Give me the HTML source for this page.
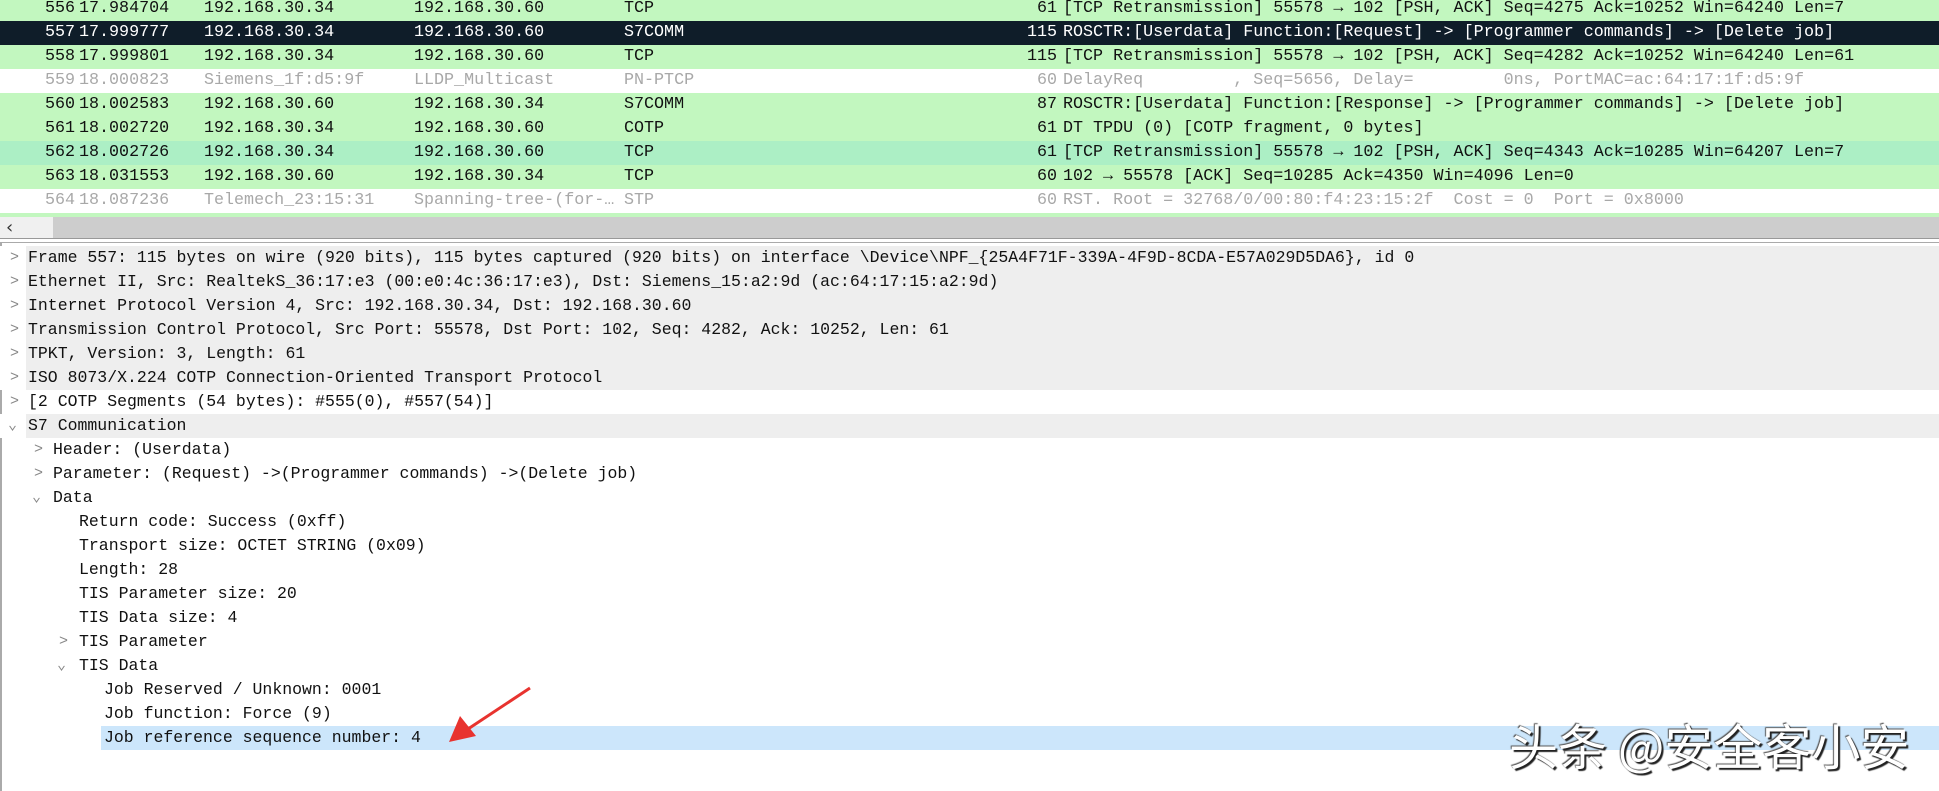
<!DOCTYPE html>
<html><head><meta charset="utf-8"><style>
html,body{margin:0;padding:0;background:#fff;}
body{width:1939px;height:791px;position:relative;overflow:hidden;font-family:"Liberation Mono","DejaVu Sans Mono",monospace;}
.pr{position:absolute;left:0;width:1939px;height:24px;line-height:24px;font-size:16.7px;white-space:pre;background:#c2f7bf;color:#111;}
.pr span{position:absolute;top:0;}
.pr .n{left:0;width:75px;text-align:right;}
.pr .t{left:79px}.pr .s{left:204px}.pr .d{left:414px}.pr .p{left:624px}
.pr .l{left:0;width:1057px;text-align:right}.pr .i{left:1063px}
.sel{background:#0f1d29;color:#fff;}
.dim{background:#fff;color:#a8a8a8;}
.alt{background:#acefc5;}
.dr{position:absolute;left:0;width:1939px;height:24px;line-height:24px;font-size:16.5px;white-space:pre;color:#111;}
.dr .a{position:absolute;top:0;color:#888;font-size:15px;}
.dr .x{position:absolute;top:0;}
.g{background:linear-gradient(to right,#fff 26px,#eeeeee 26px);}
</style></head><body>
<div style="position:absolute;left:0;top:0;width:2px;height:238px;background:#aaa"></div>

<div class="pr" style="top:-3px"><span class="n">556</span><span class="t">17.984704</span><span class="s">192.168.30.34</span><span class="d">192.168.30.60</span><span class="p">TCP</span><span class="l">61</span><span class="i">[TCP Retransmission] 55578 → 102 [PSH, ACK] Seq=4275 Ack=10252 Win=64240 Len=7</span></div>
<div class="pr sel" style="top:21px"><span class="n">557</span><span class="t">17.999777</span><span class="s">192.168.30.34</span><span class="d">192.168.30.60</span><span class="p">S7COMM</span><span class="l">115</span><span class="i">ROSCTR:[Userdata] Function:[Request] -> [Programmer commands] -> [Delete job]</span></div>
<div class="pr" style="top:45px"><span class="n">558</span><span class="t">17.999801</span><span class="s">192.168.30.34</span><span class="d">192.168.30.60</span><span class="p">TCP</span><span class="l">115</span><span class="i">[TCP Retransmission] 55578 → 102 [PSH, ACK] Seq=4282 Ack=10252 Win=64240 Len=61</span></div>
<div class="pr dim" style="top:69px"><span class="n">559</span><span class="t">18.000823</span><span class="s">Siemens_1f:d5:9f</span><span class="d">LLDP_Multicast</span><span class="p">PN-PTCP</span><span class="l">60</span><span class="i">DelayReq         , Seq=5656, Delay=         0ns, PortMAC=ac:64:17:1f:d5:9f</span></div>
<div class="pr" style="top:93px"><span class="n">560</span><span class="t">18.002583</span><span class="s">192.168.30.60</span><span class="d">192.168.30.34</span><span class="p">S7COMM</span><span class="l">87</span><span class="i">ROSCTR:[Userdata] Function:[Response] -> [Programmer commands] -> [Delete job]</span></div>
<div class="pr" style="top:117px"><span class="n">561</span><span class="t">18.002720</span><span class="s">192.168.30.34</span><span class="d">192.168.30.60</span><span class="p">COTP</span><span class="l">61</span><span class="i">DT TPDU (0) [COTP fragment, 0 bytes]</span></div>
<div class="pr alt" style="top:141px"><span class="n">562</span><span class="t">18.002726</span><span class="s">192.168.30.34</span><span class="d">192.168.30.60</span><span class="p">TCP</span><span class="l">61</span><span class="i">[TCP Retransmission] 55578 → 102 [PSH, ACK] Seq=4343 Ack=10285 Win=64207 Len=7</span></div>
<div class="pr" style="top:165px"><span class="n">563</span><span class="t">18.031553</span><span class="s">192.168.30.60</span><span class="d">192.168.30.34</span><span class="p">TCP</span><span class="l">60</span><span class="i">102 → 55578 [ACK] Seq=10285 Ack=4350 Win=4096 Len=0</span></div>
<div class="pr dim" style="top:189px"><span class="n">564</span><span class="t">18.087236</span><span class="s">Telemech_23:15:31</span><span class="d">Spanning-tree-(for-…</span><span class="p">STP</span><span class="l">60</span><span class="i">RST. Root = 32768/0/00:80:f4:23:15:2f  Cost = 0  Port = 0x8000</span></div>
<div style="position:absolute;left:0;top:213px;width:1939px;height:4px;background:#c2f7bf"></div>

<div style="position:absolute;left:0;top:217px;width:1939px;height:21px;background:#cdcdcd"></div>
<div style="position:absolute;left:0;top:217px;width:53px;height:21px;background:#f0f0f0;color:#333;font:18px 'DejaVu Sans',sans-serif;line-height:21px;padding-left:6px;box-sizing:border-box">‹</div>
<div style="position:absolute;left:0;top:238px;width:1939px;height:1px;background:#999"></div>
<div style="position:absolute;left:0;top:242px;width:1939px;height:1px;background:#aaa"></div>
<div style="position:absolute;left:0;top:242px;width:2px;height:549px;background:#aaa"></div>

<div class="dr g" style="top:246px"><span class="a" style="left:10px">&gt;</span><span class="x" style="left:28px">Frame 557: 115 bytes on wire (920 bits), 115 bytes captured (920 bits) on interface \Device\NPF_{25A4F71F-339A-4F9D-8CDA-E57A029D5DA6}, id 0</span></div>
<div class="dr g" style="top:270px"><span class="a" style="left:10px">&gt;</span><span class="x" style="left:28px">Ethernet II, Src: RealtekS_36:17:e3 (00:e0:4c:36:17:e3), Dst: Siemens_15:a2:9d (ac:64:17:15:a2:9d)</span></div>
<div class="dr g" style="top:294px"><span class="a" style="left:10px">&gt;</span><span class="x" style="left:28px">Internet Protocol Version 4, Src: 192.168.30.34, Dst: 192.168.30.60</span></div>
<div class="dr g" style="top:318px"><span class="a" style="left:10px">&gt;</span><span class="x" style="left:28px">Transmission Control Protocol, Src Port: 55578, Dst Port: 102, Seq: 4282, Ack: 10252, Len: 61</span></div>
<div class="dr g" style="top:342px"><span class="a" style="left:10px">&gt;</span><span class="x" style="left:28px">TPKT, Version: 3, Length: 61</span></div>
<div class="dr g" style="top:366px"><span class="a" style="left:10px">&gt;</span><span class="x" style="left:28px">ISO 8073/X.224 COTP Connection-Oriented Transport Protocol</span></div>
<div class="dr" style="top:390px"><span class="a" style="left:10px">&gt;</span><span class="x" style="left:28px">[2 COTP Segments (54 bytes): #555(0), #557(54)]</span></div>
<div class="dr g" style="top:414px"><span class="a" style="left:8px">⌄</span><span class="x" style="left:28px">S7 Communication</span></div>
<div class="dr" style="top:438px"><span class="a" style="left:34px">&gt;</span><span class="x" style="left:53px">Header: (Userdata)</span></div>
<div class="dr" style="top:462px"><span class="a" style="left:34px">&gt;</span><span class="x" style="left:53px">Parameter: (Request) ->(Programmer commands) ->(Delete job)</span></div>
<div class="dr" style="top:486px"><span class="a" style="left:32px">⌄</span><span class="x" style="left:53px">Data</span></div>
<div class="dr" style="top:510px"><span class="x" style="left:79px">Return code: Success (0xff)</span></div>
<div class="dr" style="top:534px"><span class="x" style="left:79px">Transport size: OCTET STRING (0x09)</span></div>
<div class="dr" style="top:558px"><span class="x" style="left:79px">Length: 28</span></div>
<div class="dr" style="top:582px"><span class="x" style="left:79px">TIS Parameter size: 20</span></div>
<div class="dr" style="top:606px"><span class="x" style="left:79px">TIS Data size: 4</span></div>
<div class="dr" style="top:630px"><span class="a" style="left:59px">&gt;</span><span class="x" style="left:79px">TIS Parameter</span></div>
<div class="dr" style="top:654px"><span class="a" style="left:57px">⌄</span><span class="x" style="left:79px">TIS Data</span></div>
<div class="dr" style="top:678px"><span class="x" style="left:104px">Job Reserved / Unknown: 0001</span></div>
<div class="dr" style="top:702px"><span class="x" style="left:104px">Job function: Force (9)</span></div>
<div class="dr" style="top:726px;left:101px;width:1838px;background:#cce6fb"><span class="x" style="left:3px">Job reference sequence number: 4</span></div>

<svg style="position:absolute;left:0;top:0" width="1939" height="791">
<line x1="530" y1="688" x2="468" y2="729" stroke="#e8332f" stroke-width="3"/>
<polygon points="449,742 460,716 476,736" fill="#e8332f"/>
</svg>
<div style="position:absolute;left:1509px;top:717px;font:49px 'Noto Sans CJK SC','WenQuanYi Zen Hei',sans-serif;color:#fff;line-height:56px;text-shadow:2px 2px 1px #222,-1px -1px 1px #555;white-space:nowrap">头条 @安全客小安</div>
</body></html>
